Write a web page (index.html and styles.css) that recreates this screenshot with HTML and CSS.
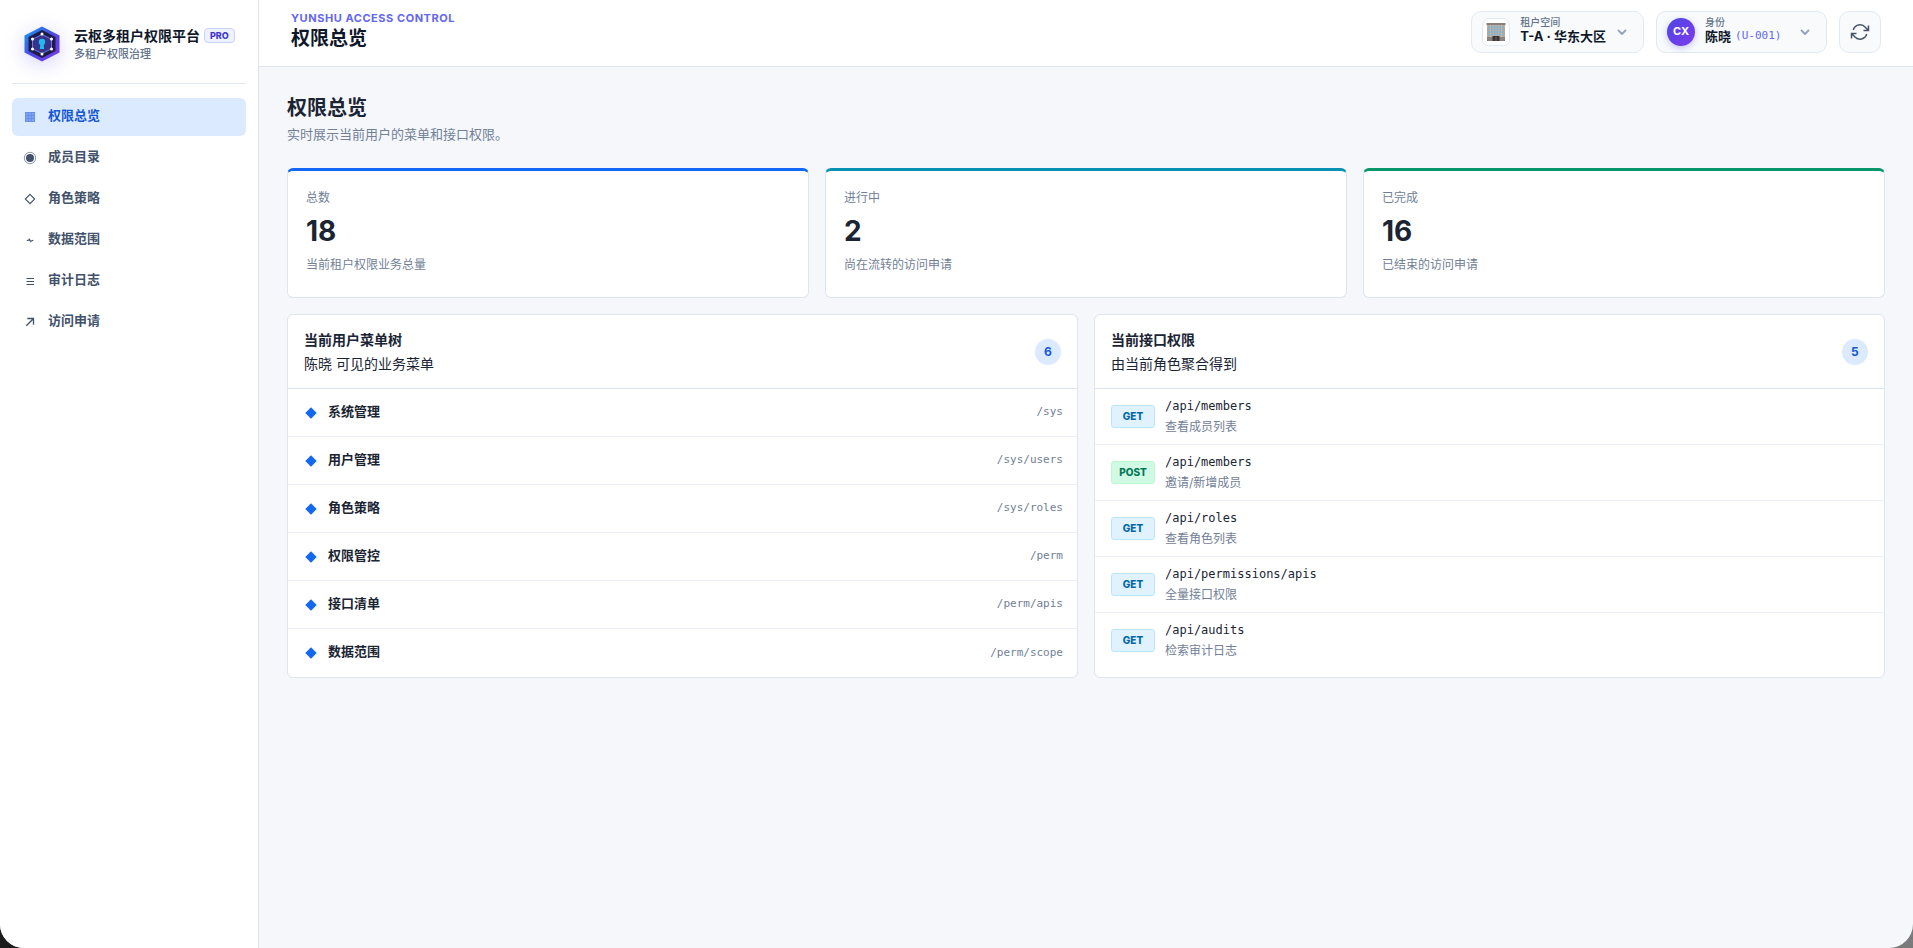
FILE: index.html
```html
<!DOCTYPE html>
<html lang="zh-CN">
<head>
  <meta charset="UTF-8">
  <meta name="viewport" content="width=device-width, initial-scale=1.0">
  <title>云枢多租户权限平台</title>
  <link rel="stylesheet" href="styles.css">
</head>
<body>
  <div class="app">
    <aside class="sidebar">
      <div class="brand">
        <svg class="brand-logo" viewBox="0 0 36 36" aria-hidden="true">
          <defs>
            <linearGradient id="logo-edge" x1="0" y1="0" x2="1" y2="1">
              <stop offset="0" stop-color="#0ea5e9"/>
              <stop offset="0.5" stop-color="#4f46e5"/>
              <stop offset="1" stop-color="#7c3aed"/>
            </linearGradient>
          </defs>
          <path d="M18 0.5 35.500 9.500v17L18 35.500 0.500 26.500v-17z" fill="url(#logo-edge)"/>
          <path d="M18 4 31.500 11v14L18 32 4.500 25V11z" fill="#1e1b4b"/>
          <path d="M18 8.500 27.500 13.200v9.600L18 27.500 8.500 22.800v-9.600z" fill="#37338a" stroke="#818cf8" stroke-width=".8"/>
          <g fill="#fff">
            <circle cx="18" cy="8" r="1.500"/><circle cx="27.500" cy="13" r="1.500"/>
            <circle cx="27.500" cy="23" r="1.500"/><circle cx="18" cy="28" r="1.500"/>
            <circle cx="8.500" cy="23" r="1.500"/><circle cx="8.500" cy="13" r="1.500"/>
          </g>
          <circle cx="18" cy="16" r="3.200" fill="#22b8f0"/>
          <path d="M16.400 17h3.200l.6 6h-4.400z" fill="#22b8f0"/>
        </svg>
        <div class="brand-text">
          <div class="brand-name">云枢多租户权限平台 <span class="brand-tag">PRO</span></div>
          <div class="brand-sub">多租户权限治理</div>
        </div>
      </div>
      <nav class="nav">
        <a class="nav-item active" href="#overview">
          <svg class="nav-icon" viewBox="0 0 14 14"><path d="M2 2h10v10H2z" fill="#7da2ef"/><path d="M2 2.500h10M2 5.500h10M2 8.500h10M2 11.500h10M2.500 2v10M5.500 2v10M8.500 2v10M11.500 2v10" stroke="#5d88ea" stroke-width=".6"/></svg>
          <span class="nav-text">权限总览</span>
        </a>
        <a class="nav-item" href="#members">
          <svg class="nav-icon" viewBox="0 0 14 14"><circle cx="7" cy="7" r="5.700" fill="none" stroke="currentColor" stroke-width=".6"/><circle cx="7" cy="7" r="4" fill="currentColor"/></svg>
          <span class="nav-text">成员目录</span>
        </a>
        <a class="nav-item" href="#roles">
          <svg class="nav-icon" viewBox="0 0 14 14"><path d="M7 2.300 11.700 7 7 11.700 2.300 7z" fill="none" stroke="currentColor" stroke-width="1.100"/></svg>
          <span class="nav-text">角色策略</span>
        </a>
        <a class="nav-item" href="#scope">
          <svg class="nav-icon" viewBox="0 0 14 14"><path d="M3.800 7.800 6.500 6.600 7.500 8.300 10.300 7.200M6 5.600 8 9.200" fill="none" stroke="currentColor" stroke-width="1.100"/></svg>
          <span class="nav-text">数据范围</span>
        </a>
        <a class="nav-item" href="#audits">
          <svg class="nav-icon" viewBox="0 0 14 14"><path d="M3.500 4.500h7.500M3.500 7.500h7.500M3.500 10.500h7.500" fill="none" stroke="currentColor" stroke-width="1.200"/></svg>
          <span class="nav-text">审计日志</span>
        </a>
        <a class="nav-item" href="#requests">
          <svg class="nav-icon" viewBox="0 0 14 14"><path d="M3.300 10.700 10.300 3.700M4.300 3.500h6.200v6.200" fill="none" stroke="currentColor" stroke-width="1.300"/></svg>
          <span class="nav-text">访问申请</span>
        </a>
      </nav>
    </aside>

    <div class="main">
      <header class="topbar">
        <div class="topbar-title">
          <div class="eyebrow">YUNSHU ACCESS CONTROL</div>
          <div class="topbar-name">权限总览</div>
        </div>
        <div class="topbar-actions">
          <div class="picker">
            <span class="picker-icon">
              <svg viewBox="0 0 20 20" aria-hidden="true">
                <path d="M.5 1h19v2H.5z" fill="#8d7f78"/>
                <path d="M1 3h18v16H1z" fill="#b3aaa0"/>
                <path d="M2.500 5h15M2.500 7.500h15M2.500 10h15M2.500 12.500h15" stroke="#7fb0cc" stroke-width="1.500"/>
                <path d="M4.500 3v12M7.200 3v12M10 3v12M12.800 3v12M15.500 3v12" stroke="#c9c6c0" stroke-width=".6"/>
                <path d="M1 15h18v4H1z" fill="#8a8480"/>
                <path d="M6.500 14h7v5h-7z" fill="#3b3536"/>
                <path d="M10 15v4" stroke="#8a8480" stroke-width=".6"/>
              </svg>
            </span>
            <div class="picker-body">
              <label class="picker-label" for="tenant">租户空间</label>
              <select class="picker-select" id="tenant">
                <option>T-A · 华东大区</option>
              </select>
            </div>
            <svg class="chevron" viewBox="0 0 12 12" aria-hidden="true"><path d="M2.500 4.500 6 8l3.500-3.500"/></svg>
          </div>
          <div class="picker">
            <span class="avatar">CX</span>
            <div class="picker-body picker-user">
              <label class="picker-label" for="identity">身份</label>
              <div class="picker-value">
                <select class="picker-select" id="identity">
                  <option>陈晓</option>
                </select>
                <span class="user-code">(U-001)</span>
              </div>
            </div>
            <svg class="chevron" viewBox="0 0 12 12" aria-hidden="true"><path d="M2.500 4.500 6 8l3.500-3.500"/></svg>
          </div>
          <button class="refresh" type="button" aria-label="刷新">
            <svg viewBox="0 0 20 20" aria-hidden="true"><path d="M18.500 3.500V8.500h-5M1.500 16.500v-5h5M3.300 8a7 7 0 0 1 12-2.800L18.500 8.500M16.700 12a7 7 0 0 1-12 2.800L1.500 11.500"/></svg>
          </button>
        </div>
      </header>

      <main class="content">
        <h1 class="page-title">权限总览</h1>
        <p class="page-sub">实时展示当前用户的菜单和接口权限。</p>

        <section class="stats">
          <div class="stat stat-blue">
            <div class="stat-label">总数</div>
            <div class="stat-value">18</div>
            <div class="stat-label">当前租户权限业务总量</div>
          </div>
          <div class="stat stat-teal">
            <div class="stat-label">进行中</div>
            <div class="stat-value">2</div>
            <div class="stat-label">尚在流转的访问申请</div>
          </div>
          <div class="stat stat-green">
            <div class="stat-label">已完成</div>
            <div class="stat-value">16</div>
            <div class="stat-label">已结束的访问申请</div>
          </div>
        </section>

        <section class="panels">
          <div class="panel">
            <div class="panel-head">
              <div>
                <h2 class="panel-title">当前用户菜单树</h2>
                <p class="panel-sub">陈晓 可见的业务菜单</p>
              </div>
              <span class="count">6</span>
            </div>
            <ul class="list">
              <li class="menu-row"><span class="diamond"></span><span class="menu-name">系统管理</span><code class="menu-path">/sys</code></li>
              <li class="menu-row"><span class="diamond"></span><span class="menu-name">用户管理</span><code class="menu-path">/sys/users</code></li>
              <li class="menu-row"><span class="diamond"></span><span class="menu-name">角色策略</span><code class="menu-path">/sys/roles</code></li>
              <li class="menu-row"><span class="diamond"></span><span class="menu-name">权限管控</span><code class="menu-path">/perm</code></li>
              <li class="menu-row"><span class="diamond"></span><span class="menu-name">接口清单</span><code class="menu-path">/perm/apis</code></li>
              <li class="menu-row"><span class="diamond"></span><span class="menu-name">数据范围</span><code class="menu-path">/perm/scope</code></li>
            </ul>
          </div>

          <div class="panel">
            <div class="panel-head">
              <div>
                <h2 class="panel-title">当前接口权限</h2>
                <p class="panel-sub">由当前角色聚合得到</p>
              </div>
              <span class="count">5</span>
            </div>
            <ul class="list">
              <li class="api-row"><span class="method">GET</span><div><code class="api-path">/api/members</code><div class="api-desc">查看成员列表</div></div></li>
              <li class="api-row"><span class="method post">POST</span><div><code class="api-path">/api/members</code><div class="api-desc">邀请/新增成员</div></div></li>
              <li class="api-row"><span class="method">GET</span><div><code class="api-path">/api/roles</code><div class="api-desc">查看角色列表</div></div></li>
              <li class="api-row"><span class="method">GET</span><div><code class="api-path">/api/permissions/apis</code><div class="api-desc">全量接口权限</div></div></li>
              <li class="api-row"><span class="method">GET</span><div><code class="api-path">/api/audits</code><div class="api-desc">检索审计日志</div></div></li>
            </ul>
          </div>
        </section>
      </main>
    </div>
  </div>
</body>
</html>
```
FILE: styles.css
```css
* {
  box-sizing: border-box;
}
html {
  background: linear-gradient(90deg, #1c1c1c, #7a7a7a);
}
body {
  margin: 0;
  font-family: Inter, "Noto Sans CJK SC", sans-serif;
  font-size: 14px;
  line-height: 1.5;
  color: #1a2433;
}
h1, h2, p, ul {
  margin: 0;
  padding: 0;
}
.app {
  display: flex;
  min-height: 100vh;
  background: #f5f7fb;
  border-radius: 0 0 24px 24px;
  overflow: hidden;
}

/* sidebar */
.sidebar {
  width: 259px;
  flex-shrink: 0;
  padding: 12px;
  background: #fff;
  border-right: 1px solid #dde5ef;
}
.brand {
  display: flex;
  align-items: center;
  gap: 14px;
  height: 72px;
  padding: 0 0 8px 12px;
  border-bottom: 1px solid #e2e8f0;
}
.brand-logo {
  width: 36px;
  height: 36px;
  flex-shrink: 0;
  filter: drop-shadow(0 4px 10px rgba(79, 70, 229, 0.25));
}
.brand-name {
  display: flex;
  align-items: center;
  gap: 4px;
  font-size: 14px;
  font-weight: 700;
  line-height: 20px;
  color: #0f172a;
  white-space: nowrap;
}
.brand-tag {
  padding: 0 5px;
  border: 1px solid #c7d2fe;
  border-radius: 4px;
  background: #eef2ff;
  color: #4338ca;
  font-size: 9px;
  font-weight: 800;
  line-height: 13px;
}
.brand-sub {
  font-size: 11px;
  font-weight: 500;
  line-height: 16px;
  color: #64748b;
}
.nav {
  display: flex;
  flex-direction: column;
  gap: 3px;
  margin-top: 14px;
}
.nav-item {
  display: flex;
  align-items: center;
  gap: 11px;
  height: 38px;
  padding: 0 11px;
  border-radius: 6px;
  color: #42526b;
  font-size: 13px;
  font-weight: 600;
  text-decoration: none;
}
.nav-item.active {
  background: #dbeafe;
  color: #1557d6;
}
.nav-icon {
  width: 14px;
  height: 14px;
}
.nav-text,
.menu-name {
  padding-bottom: 2px;
}

/* top bar */
.main {
  flex: 1;
  min-width: 0;
}
.topbar {
  display: flex;
  align-items: center;
  justify-content: space-between;
  height: 67px;
  padding: 0 32px 2px;
  background: #fff;
  border-bottom: 1px solid #dde5ef;
}
.topbar-title {
  padding-bottom: 2px;
}
.eyebrow {
  font-size: 11px;
  font-weight: 700;
  letter-spacing: 0.05em;
  line-height: 16px;
  color: #6366f1;
}
.topbar-name {
  font-size: 19px;
  font-weight: 700;
  line-height: 26px;
  color: #0f172a;
}
.topbar-actions {
  display: flex;
  align-items: center;
  gap: 12px;
}
.picker {
  display: flex;
  align-items: center;
  gap: 10px;
  height: 42px;
  padding: 0 15px 0 10px;
  background: #f8fafc;
  border: 1px solid #e2e8f0;
  border-radius: 10px;
}
.picker-icon {
  display: flex;
  align-items: center;
  justify-content: center;
  width: 28px;
  height: 28px;
  background: #fff;
  border: 1px solid #e2e8f0;
  border-radius: 7px;
}
.picker-icon svg {
  width: 20px;
  height: 20px;
}
.avatar {
  width: 28px;
  height: 28px;
  border-radius: 50%;
  background: linear-gradient(135deg, #4f46e5, #7c3aed);
  box-shadow: 0 2px 6px rgba(79, 70, 229, 0.3);
  color: #fff;
  font-size: 11px;
  font-weight: 700;
  line-height: 27px;
  text-align: center;
}
.picker-body {
  display: flex;
  flex-direction: column;
  padding-bottom: 4px;
}
.picker-user {
  width: 84px;
}
.picker-label {
  font-size: 10px;
  font-weight: 500;
  line-height: 12px;
  color: #64748b;
}
.picker-value {
  display: flex;
  align-items: center;
  gap: 4px;
}
.picker-select {
  appearance: none;
  field-sizing: content;
  height: 16px;
  padding: 0;
  border: 0;
  background: none;
  color: #0f172a;
  font-family: inherit;
  font-size: 13px;
  font-weight: 700;
  line-height: 16px;
}
.user-code {
  font-family: "DejaVu Sans Mono", monospace;
  font-size: 11px;
  line-height: 16px;
  color: #6366f1;
}
.chevron {
  width: 12px;
  height: 12px;
  fill: none;
  stroke: #94a3b8;
  stroke-width: 1.8;
  stroke-linecap: round;
  stroke-linejoin: round;
}
.refresh {
  display: flex;
  align-items: center;
  justify-content: center;
  width: 42px;
  height: 42px;
  padding: 0;
  background: #f8fafc;
  border: 1px solid #e2e8f0;
  border-radius: 10px;
}
.refresh svg {
  width: 20px;
  height: 20px;
  fill: none;
  stroke: #475569;
  stroke-width: 1.5;
}

/* content */
.content {
  padding: 28px;
}
.page-title {
  font-size: 20px;
  font-weight: 700;
  line-height: 26px;
}
.page-sub {
  margin-top: 3px;
  font-size: 13px;
  line-height: 20px;
  color: #718096;
}
.stats {
  display: grid;
  grid-template-columns: repeat(3, 1fr);
  gap: 16px;
  margin-top: 24px;
}
.stat {
  padding: 17px 18px 22px;
  background: #fff;
  border: 1px solid #dde5ef;
  border-top-width: 3px;
  border-radius: 6px;
}
.stat-blue {
  border-top-color: #1268f3;
}
.stat-teal {
  border-top-color: #0891b2;
}
.stat-green {
  border-top-color: #059669;
}
.stat-label {
  font-size: 12px;
  line-height: 20px;
  color: #718096;
}
.stat-value {
  margin: 5px 0 6px;
  font-size: 28px;
  font-weight: 700;
  line-height: 36px;
}
.panels {
  display: grid;
  grid-template-columns: repeat(2, 1fr);
  gap: 16px;
  margin-top: 16px;
}
.panel {
  background: #fff;
  border: 1px solid #dde5ef;
  border-radius: 6px;
}
.panel-head {
  display: flex;
  align-items: center;
  justify-content: space-between;
  padding: 13px 16px;
  border-bottom: 1px solid #dde5ef;
}
.panel-title {
  font-size: 14px;
  line-height: 24px;
}
.panel-sub {
  font-size: 14px;
  line-height: 23px;
}
.count {
  min-width: 26px;
  padding: 0 9px;
  border-radius: 13px;
  background: #dbeafe;
  color: #1557d6;
  font-size: 12px;
  font-weight: 700;
  line-height: 26px;
}
.list {
  list-style: none;
}
.menu-row {
  display: flex;
  align-items: center;
  gap: 13px;
  height: 48px;
  padding: 0 14px 0 19px;
  border-bottom: 1px solid #edf1f7;
}
.diamond {
  width: 8px;
  height: 8px;
  background: #1268f3;
  transform: rotate(45deg);
}
.menu-name {
  flex: 1;
  font-size: 13px;
  font-weight: 600;
}
.menu-path {
  font-family: "DejaVu Sans Mono", monospace;
  font-size: 11px;
  color: #718096;
}
.api-row {
  display: flex;
  align-items: center;
  gap: 10px;
  height: 56px;
  padding: 0 16px 1px;
  border-bottom: 1px solid #edf1f7;
}
.menu-row:last-child,
.api-row:last-child {
  border-bottom: 0;
}
.method {
  width: 44px;
  border: 1px solid #bae6fd;
  border-radius: 3px;
  background: #e0f2fe;
  color: #0369a1;
  font-size: 10px;
  font-weight: 800;
  line-height: 21px;
  text-align: center;
}
.method.post {
  border-color: #bbf7d0;
  background: #d1fae5;
  color: #047857;
}
.api-path {
  display: block;
  margin-bottom: 1px;
  font-family: "DejaVu Sans Mono", monospace;
  font-size: 12px;
  line-height: 20px;
}
.api-desc {
  font-size: 12px;
  line-height: 20px;
  color: #718096;
}
```
